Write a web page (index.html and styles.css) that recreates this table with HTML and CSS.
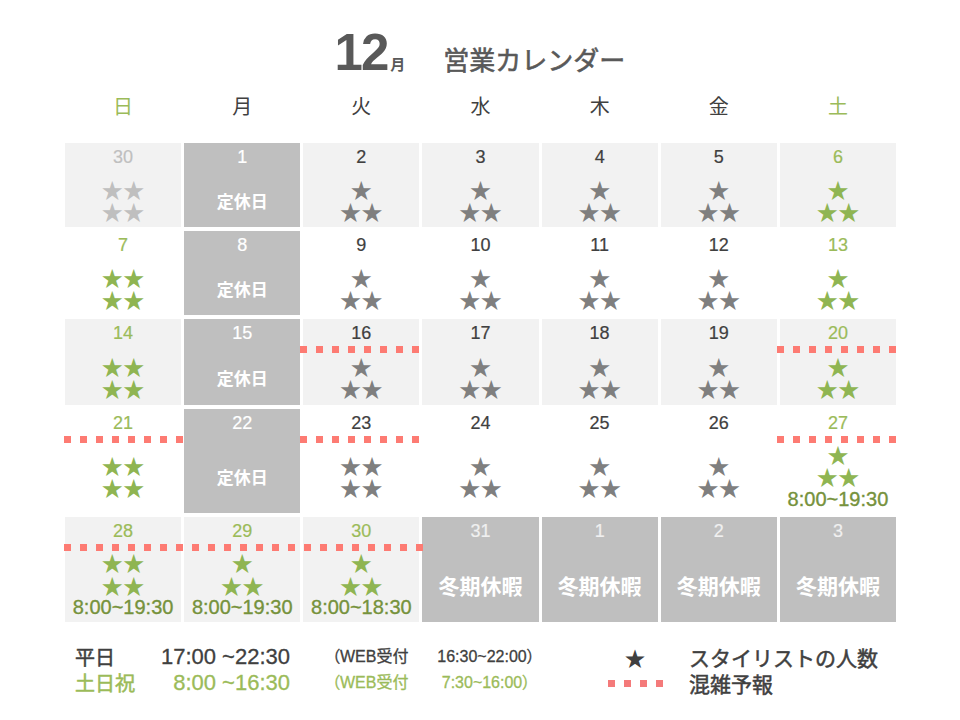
FILE: index.html
```html
<!DOCTYPE html>
<html lang="ja">
<head>
<meta charset="utf-8">
<title>12月 営業カレンダー</title>
<link rel="stylesheet" href="styles.css">
</head>
<body>
<div class="page">
  <h1 class="title"><span class="month-num">12</span><span class="month-unit">月</span><span class="title-text">営業カレンダー</span></h1>

  <div class="weekdays">
    <div class="wd g">日</div><div class="wd">月</div><div class="wd">火</div><div class="wd">水</div><div class="wd">木</div><div class="wd">金</div><div class="wd g">土</div>
  </div>

  <div class="calendar">
    <!-- week 1 -->
    <div class="cell shade prev"><div class="date">30</div><div class="body"><span class="stars">★★</span><span class="stars">★★</span></div></div>
    <div class="cell closed"><div class="date">1</div><div class="body"><span class="off">定休日</span></div></div>
    <div class="cell shade"><div class="date">2</div><div class="body"><span class="stars">★</span><span class="stars">★★</span></div></div>
    <div class="cell shade"><div class="date">3</div><div class="body"><span class="stars">★</span><span class="stars">★★</span></div></div>
    <div class="cell shade"><div class="date">4</div><div class="body"><span class="stars">★</span><span class="stars">★★</span></div></div>
    <div class="cell shade"><div class="date">5</div><div class="body"><span class="stars">★</span><span class="stars">★★</span></div></div>
    <div class="cell shade g"><div class="date">6</div><div class="body"><span class="stars">★</span><span class="stars">★★</span></div></div>
    <!-- week 2 -->
    <div class="cell g"><div class="date">7</div><div class="body"><span class="stars">★★</span><span class="stars">★★</span></div></div>
    <div class="cell closed"><div class="date">8</div><div class="body"><span class="off">定休日</span></div></div>
    <div class="cell"><div class="date">9</div><div class="body"><span class="stars">★</span><span class="stars">★★</span></div></div>
    <div class="cell"><div class="date">10</div><div class="body"><span class="stars">★</span><span class="stars">★★</span></div></div>
    <div class="cell"><div class="date">11</div><div class="body"><span class="stars">★</span><span class="stars">★★</span></div></div>
    <div class="cell"><div class="date">12</div><div class="body"><span class="stars">★</span><span class="stars">★★</span></div></div>
    <div class="cell g"><div class="date">13</div><div class="body"><span class="stars">★</span><span class="stars">★★</span></div></div>
    <!-- week 3 -->
    <div class="cell shade g"><div class="date">14</div><div class="body"><span class="stars">★★</span><span class="stars">★★</span></div></div>
    <div class="cell closed"><div class="date">15</div><div class="body"><span class="off">定休日</span></div></div>
    <div class="cell shade"><div class="date">16</div><div class="crowd"></div><div class="body"><span class="stars">★</span><span class="stars">★★</span></div></div>
    <div class="cell shade"><div class="date">17</div><div class="body"><span class="stars">★</span><span class="stars">★★</span></div></div>
    <div class="cell shade"><div class="date">18</div><div class="body"><span class="stars">★</span><span class="stars">★★</span></div></div>
    <div class="cell shade"><div class="date">19</div><div class="body"><span class="stars">★</span><span class="stars">★★</span></div></div>
    <div class="cell shade g"><div class="date">20</div><div class="crowd"></div><div class="body"><span class="stars">★</span><span class="stars">★★</span></div></div>
    <!-- week 4 -->
    <div class="cell g"><div class="date">21</div><div class="crowd first"></div><div class="body"><span class="stars">★★</span><span class="stars">★★</span></div></div>
    <div class="cell closed"><div class="date">22</div><div class="body"><span class="off">定休日</span></div></div>
    <div class="cell"><div class="date">23</div><div class="crowd"></div><div class="body"><span class="stars">★★</span><span class="stars">★★</span></div></div>
    <div class="cell"><div class="date">24</div><div class="body"><span class="stars">★</span><span class="stars">★★</span></div></div>
    <div class="cell"><div class="date">25</div><div class="body"><span class="stars">★</span><span class="stars">★★</span></div></div>
    <div class="cell"><div class="date">26</div><div class="body"><span class="stars">★</span><span class="stars">★★</span></div></div>
    <div class="cell g"><div class="date">27</div><div class="crowd"></div><div class="body"><span class="stars">★</span><span class="stars">★★</span><span class="time">8:00~19:30</span></div></div>
    <!-- week 5 -->
    <div class="cell shade g"><div class="date">28</div><div class="crowd first span3"></div><div class="body"><span class="stars">★★</span><span class="stars">★★</span><span class="time">8:00~19:30</span></div></div>
    <div class="cell shade g"><div class="date">29</div><div class="body"><span class="stars">★</span><span class="stars">★★</span><span class="time">8:00~19:30</span></div></div>
    <div class="cell shade g"><div class="date">30</div><div class="body"><span class="stars">★</span><span class="stars">★★</span><span class="time">8:00~18:30</span></div></div>
    <div class="cell closed winter"><div class="date">31</div><div class="body"><span class="off">冬期休暇</span></div></div>
    <div class="cell closed winter"><div class="date">1</div><div class="body"><span class="off">冬期休暇</span></div></div>
    <div class="cell closed winter"><div class="date">2</div><div class="body"><span class="off">冬期休暇</span></div></div>
    <div class="cell closed winter"><div class="date">3</div><div class="body"><span class="off">冬期休暇</span></div></div>
  </div>

  <div class="legend">
    <div class="hours">
      <span class="lbl">平日</span><span class="tm">17:00 ~22:30</span><span class="web">（WEB受付</span><span class="wtm">16:30~22:00）</span>
      <span class="lbl g">土日祝</span><span class="tm g">8:00 ~16:30</span><span class="web g">（WEB受付</span><span class="wtm g">7:30~16:00）</span>
    </div>
    <div class="key">
      <span class="key-icon">★</span><span class="key-txt">スタイリストの人数</span>
      <span class="key-icon"><span class="dots"></span></span><span class="key-txt">混雑予報</span>
    </div>
  </div>
</div>
</body>
</html>
```
FILE: styles.css
```css
html, body {
  margin: 0;
  padding: 0;
  background: #ffffff;
}

body {
  font-family: "Liberation Sans", "Noto Sans CJK JP", sans-serif;
  color: #404040;
}

.page {
  width: 960px;
  height: 720px;
  overflow: hidden;
}

/* ---------- title ---------- */
.title {
  margin: 0;
  padding-top: 27px;
  height: 51px;
  display: flex;
  justify-content: center;
  align-items: baseline;
  color: #595959;
  font-weight: normal;
  line-height: 51px;
}

.month-num {
  font-family: "Liberation Sans", sans-serif;
  font-size: 51px;
  font-weight: 700;
  letter-spacing: -2px;
}

.month-unit {
  font-family: "Noto Sans CJK JP", sans-serif;
  font-size: 15px;
  font-weight: 700;
  margin-left: 3px;
}

.title-text {
  font-family: "Noto Sans CJK JP", sans-serif;
  font-size: 26px;
  font-weight: 400;
  -webkit-text-stroke: 0.6px #595959;
  margin-left: 38px;
}

/* ---------- weekdays ---------- */
.weekdays {
  width: 831px;
  margin: 16px 0 25px 65px;
  display: grid;
  grid-template-columns: repeat(7, 1fr);
  column-gap: 3px;
  text-align: center;
  font-family: "Noto Sans CJK JP", sans-serif;
  font-size: 20px;
  line-height: 24px;
  color: #404040;
}

.wd.g {
  color: #9bbb59;
}

/* ---------- calendar ---------- */
.calendar {
  width: 831px;
  margin-left: 65px;
  display: grid;
  grid-template-columns: repeat(7, 1fr);
  grid-template-rows: 84px 84px 86px 104px 105px;
  gap: 4px 3px;
}

.cell {
  position: relative;
  display: flex;
  flex-direction: column;
  background: #ffffff;
}

.cell::before {
  content: "";
  position: absolute;
  top: 30px;
  left: -3px;
  right: 0;
  height: 1px;
  background: #e6e6e6;
  z-index: -1;
}

.cell.shade {
  background: #f2f2f2;
}

.cell.closed {
  background: #bfbfbf;
}

.cell.closed::before {
  right: -3px;
  background: #a6a6a6;
}

.date {
  height: 30px;
  line-height: 28px;
  text-align: center;
  font-size: 18px;
  color: #404040;
  -webkit-text-stroke: 0.2px currentColor;
}

.body {
  flex: 1;
  display: flex;
  flex-direction: column;
  justify-content: center;
  align-items: center;
}

.stars {
  font-family: "Noto Sans CJK JP", sans-serif;
  font-size: 21.5px;
  line-height: 22.5px;
  height: 22.5px;
  color: #7f7f7f;
}

.time {
  font-size: 20px;
  line-height: 22px;
  color: #76923c;
  -webkit-text-stroke: 0.35px #76923c;
}

.off {
  font-family: "Noto Sans CJK JP", sans-serif;
  font-size: 17px;
  font-weight: 700;
  color: #ffffff;
}

.winter .off {
  font-size: 21px;
}

.closed .date {
  color: #ffffff;
}

.winter .date {
  color: #f0f0f0;
}

.prev .date,
.prev .stars {
  color: #bfbfbf;
}

.g .date {
  color: #9bbb59;
}

.g .stars {
  color: #8fb552;
}

/* crowd forecast dotted line */
.crowd {
  position: absolute;
  top: 27px;
  left: -3px;
  width: 122px;
  height: 7px;
  background: repeating-linear-gradient(90deg, #fd7b73 0 7px, transparent 7px 16px);
  z-index: 1;
}

.crowd.first {
  left: -1px;
}

.crowd.span3 {
  width: 360px;
}

/* ---------- legend ---------- */
.legend {
  display: flex;
  margin: 22px 0 0 75px;
}

.hours {
  display: grid;
  grid-template-columns: 85px 130px 141px 110px;
  grid-auto-rows: 26px;
  line-height: 26px;
  color: #404040;
}

.hours .g {
  color: #9bbb59;
}

.lbl {
  font-family: "Noto Sans CJK JP", sans-serif;
  font-size: 20px;
  -webkit-text-stroke: 0.5px currentColor;
}

.tm {
  font-size: 22px;
  text-align: right;
  -webkit-text-stroke: 0.3px currentColor;
}

.web {
  padding-left: 42px;
  font-size: 16px;
  font-feature-settings: "palt";
  -webkit-text-stroke: 0.3px currentColor;
}

.wtm {
  font-size: 16px;
  text-align: center;
  font-feature-settings: "palt";
  -webkit-text-stroke: 0.3px currentColor;
}

.key {
  margin-left: 64px;
  display: grid;
  grid-template-columns: 60px auto;
  grid-auto-rows: 26px;
  column-gap: 24px;
  line-height: 26px;
  align-items: center;
}

.key-icon {
  display: flex;
  justify-content: center;
  align-items: center;
  font-family: "Noto Sans CJK JP", sans-serif;
  font-size: 21px;
  color: #404040;
}

.dots {
  display: block;
  width: 55px;
  height: 7px;
  background: repeating-linear-gradient(90deg, #f47a7a 0 7px, transparent 7px 16px);
}

.key-txt {
  font-family: "Noto Sans CJK JP", sans-serif;
  font-size: 21px;
  -webkit-text-stroke: 0.5px #404040;
  color: #404040;
}
```
